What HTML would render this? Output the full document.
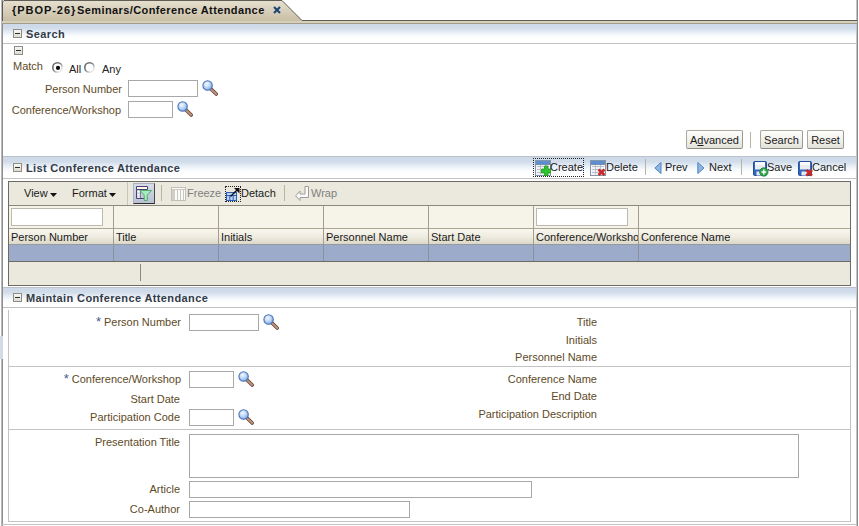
<!DOCTYPE html>
<html><head><meta charset="utf-8">
<style>
*{box-sizing:border-box;margin:0;padding:0}
html,body{width:859px;height:526px;overflow:hidden;background:#fff;font-family:"Liberation Sans",sans-serif;font-size:11px}
.a{position:absolute}
.t{position:absolute;white-space:nowrap;line-height:13px;font-size:11px}
.lbl{color:#5e4a26}
.r{text-align:right}
.hdr{position:absolute;left:3px;width:853px;height:20px;background:linear-gradient(#cdd9e8 0,#d1dcea 22%,#e6edf5 42%,#f9fbfd 62%,#fff 80%);border-bottom:1px solid #c3c3c3}
.htxt{position:absolute;left:23px;top:4px;font-weight:bold;font-size:11px;line-height:13px;color:#333b48;letter-spacing:0.33px;white-space:nowrap}
.col{position:absolute;width:9px;height:9px;border:1px solid #8e8e86;background:linear-gradient(#f8f8f4,#dcdcd2)}
.col:after{content:"";position:absolute;left:1px;top:3px;width:5px;height:1px;background:#2e2e2e}
.inp{position:absolute;border:1px solid #a8a8a8;background:#fff}
.btn{position:absolute;top:130px;height:19px;border:1px solid #a9a89f;border-bottom-color:#8e8d85;border-right-color:#9a998f;background:linear-gradient(#fefefd,#f2f1ec 50%,#e2e1d9);color:#1a1a1a;text-align:center;line-height:19px;font-size:11px;border-radius:2px}
.sep{position:absolute;width:1px;background:#b9b5a4}
.ftxt{position:absolute;white-space:nowrap;font-size:11px;line-height:13px;color:#1a1a1a}
.mag{position:absolute;width:17px;height:17px}
</style></head><body>
<svg width="0" height="0" style="position:absolute">
<defs>
<radialGradient id="lens" cx="0.4" cy="0.35" r="0.7"><stop offset="0" stop-color="#f4f9ff"/><stop offset="0.55" stop-color="#b9d3f5"/><stop offset="1" stop-color="#6f9be0"/></radialGradient>
<symbol id="magi" viewBox="0 0 17 17">
<line x1="9.3" y1="9.3" x2="14.2" y2="14" stroke="#6a4636" stroke-width="3.6" stroke-linecap="round"/>
<line x1="9.3" y1="9.3" x2="14.2" y2="14" stroke="#c09682" stroke-width="1.8" stroke-linecap="round"/>
<circle cx="5.6" cy="5.5" r="4.7" fill="url(#lens)" stroke="#4a74b8" stroke-width="1.1"/>
</symbol>
</defs></svg>
<!-- outer borders -->
<div class="a" style="left:1px;top:0;width:1px;height:526px;background:#b8b8b8"></div><div class="a" style="left:2px;top:0;width:1px;height:526px;background:#8e8e8e"></div>
<div class="a" style="left:856px;top:0;width:1px;height:526px;background:#c4c4c4"></div><div class="a" style="left:857px;top:0;width:1px;height:526px;background:#8a8a8a"></div>
<div class="a" style="left:0;top:336px;width:3px;height:23px;background:#d3dce6"></div>

<!-- tab -->
<svg class="a" style="left:0;top:0" width="859" height="24">
<defs><linearGradient id="tg" x1="0" y1="0" x2="0" y2="1"><stop offset="0" stop-color="#e6e0cf"/><stop offset="1" stop-color="#c6bba2"/></linearGradient></defs>
<path d="M2,22 L2,2 L4,0.5 L282,0.5 L302,20.5 L857,20.5 L857,23 L2,23 Z" fill="url(#tg)"/>
<path d="M2.5,21 L2.5,2 L4,0.5 L282,0.5 L302,20.5 L857,20.5" fill="none" stroke="#4e4c44" stroke-width="0.9"/>
<rect x="2" y="21" width="855" height="2" fill="#d6cfba"/>
<rect x="2" y="23" width="855" height="1" fill="#a29c88"/>
</svg>
<div class="t" style="left:12px;top:4px;font-weight:bold;color:#111;letter-spacing:0.95px">{PBOP-26}</div><div class="t" style="left:77px;top:4px;font-weight:bold;color:#111;letter-spacing:0.4px">Seminars/Conference Attendance</div>
<svg class="a" style="left:273px;top:6px" width="8" height="8"><path d="M1,1 L7,7 M7,1 L1,7" stroke="#1b4474" stroke-width="2.1"/></svg>

<!-- search header -->
<div class="hdr" style="top:24px"><div class="col" style="left:10px;top:5px"></div><div class="htxt" style="letter-spacing:0.4px">Search</div></div>
<div class="col" style="left:14px;top:46px"></div>
<div class="t lbl" style="left:13px;top:60px">Match</div>
<svg class="a" style="left:52px;top:62px" width="11" height="11"><defs><linearGradient id="rb" x1="0" y1="0" x2="1" y2="1"><stop offset="0" stop-color="#5a5a5a"/><stop offset="0.45" stop-color="#7c7c7c"/><stop offset="0.75" stop-color="#dcdcdc"/><stop offset="1" stop-color="#f6f6f6"/></linearGradient></defs><circle cx="5.5" cy="5.5" r="4.7" fill="#fff" stroke="url(#rb)" stroke-width="1.6"/><circle cx="6" cy="5.9" r="2.1" fill="#0a0a0a"/></svg>
<div class="t" style="left:69px;top:63px;color:#222">All</div>
<svg class="a" style="left:84px;top:62px" width="11" height="11"><circle cx="5.5" cy="5.5" r="4.7" fill="#fff" stroke="url(#rb)" stroke-width="1.6"/></svg>
<div class="t" style="left:102px;top:63px;color:#222">Any</div>
<div class="t lbl r" style="left:20px;width:102px;top:83px">Person Number</div>
<div class="inp" style="left:128px;top:80px;width:70px;height:17px"></div>
<svg class="mag" style="left:202px;top:80px"><use href="#magi"/></svg>
<div class="t lbl r" style="left:10px;width:111px;top:104px">Conference/Workshop</div>
<div class="inp" style="left:128px;top:101px;width:45px;height:17px"></div>
<svg class="mag" style="left:177px;top:101px"><use href="#magi"/></svg>

<div class="btn" style="left:686px;width:57px">A<span style="text-decoration:underline">d</span>vanced</div>
<div class="sep" style="left:750px;top:132px;height:16px"></div>
<div class="btn" style="left:760px;width:43px">Search</div>
<div class="btn" style="left:807px;width:37px">Reset</div>

<!-- list header -->
<div class="hdr" style="top:156px;height:23px;border-top:1px solid #bcc2ca"><div class="col" style="left:10px;top:6px"></div><div class="htxt" style="top:5px">List Conference Attendance</div></div>

<!-- table -->
<div class="a" style="left:8px;top:181px;width:843px;height:105px;border:1px solid #6e6c62;background:#ebe9dd"></div>
<div class="a" style="left:9px;top:205px;width:841px;height:1px;background:#8a887e"></div>
<div class="a" style="left:9px;top:206px;width:841px;height:22px;background:#f6f3e8"></div>
<div class="a" style="left:9px;top:228px;width:841px;height:1px;background:#a9a696"></div>
<div class="a" style="left:9px;top:229px;width:841px;height:15px;background:linear-gradient(#f8f6ee,#efece1 50%,#dcd8c8)"></div>
<div class="a" style="left:9px;top:244px;width:841px;height:17px;background:#9cabc9;border-top:1px solid #969aa3"></div>
<div class="a" style="left:9px;top:261px;width:841px;height:1px;background:#6c6b64"></div>

<!-- toolbar -->
<div class="ftxt" style="left:24px;top:187px">View</div>
<svg class="a" style="left:50px;top:193px" width="8" height="5"><path d="M0,0 L7,0 L3.5,4 Z" fill="#111"/></svg>
<div class="ftxt" style="left:72px;top:187px">Format</div>
<svg class="a" style="left:109px;top:193px" width="8" height="5"><path d="M0,0 L7,0 L3.5,4 Z" fill="#111"/></svg>
<div class="a" style="left:127px;top:182px;width:1px;height:23px;background:#c9c6b8"></div>
<div class="a" style="left:133px;top:183px;width:22px;height:21px;border:1px solid #6f7a8c;border-top-color:#aab3c2;border-left-color:#aab3c2;border-bottom-color:#2d2d2d;border-right-color:#4a4a4a;background:linear-gradient(#d7dde8,#b8c2d3)"></div>
<svg class="a" style="left:136px;top:186px" width="17" height="16">
<path d="M0.5,0.5 H11.5 V3.5 H0.5 Z" fill="#fffbe6" stroke="#4a4272"/>
<path d="M0.5,3.5 V12.5 H11.5" fill="none" stroke="#4a4272"/>
<path d="M1.5,5 H3.5 V6.5 H1.5 Z M1.5,8 H3.5 V9.5 H1.5 Z M1.5,10.5 H3.5 V11.8 H1.5 Z" fill="#fff"/>
<path d="M4.5,4 V12" stroke="#6d6890" stroke-width="0.8"/>
<path d="M4,4.5 L15.5,4.5 L11.3,9.2 L11.3,14.5 L8.2,14.5 L8.2,9.2 Z" fill="#a6ebbd" stroke="#4ba566" stroke-width="0.9"/>
</svg>
<div class="a" style="left:161px;top:185px;width:1px;height:16px;background:#b9b5a4"></div>
<svg class="a" style="left:171px;top:187px" width="15" height="14">
<rect x="0.5" y="0.5" width="14" height="13" fill="#fbfbf8" stroke="#c0c0b8"/>
<rect x="1" y="2" width="3" height="11" fill="#cfcfc8"/>
<path d="M1,2.5 H14 M6.5,2 V13 M9.5,2 V13 M12.5,2 V13" stroke="#c8c8c0"/>
</svg>
<div class="ftxt" style="left:187px;top:187px;color:#7f7f7f">Freeze</div>
<div class="a" style="left:225px;top:186px;width:16px;height:16px;border:1px dotted #222"></div>
<svg class="a" style="left:226px;top:187px" width="15" height="15">
<rect x="0.5" y="5.5" width="10" height="8" fill="#bcd4f4" stroke="#2f5fb8"/>
<path d="M0.5,8.5 H10.5 M3.8,8.5 V13.5 M7.2,8.5 V13.5" stroke="#2f5fb8"/>
<path d="M4.5,9.5 L12.5,1.5" stroke="#111" stroke-width="1.4"/>
<path d="M8,1 H13.5 V6.5 Z" fill="#111"/>
</svg>
<div class="ftxt" style="left:241px;top:187px">Detach</div>
<div class="a" style="left:284px;top:185px;width:1px;height:16px;background:#b9b5a4"></div>
<svg class="a" style="left:295px;top:186px" width="15" height="15">
<path d="M10,0.5 H13.5 V11.5 H5 V14.5 L0.6,9.8 L5,5 V8 H10 Z" fill="#fafafa" stroke="#9c9c98" stroke-width="1"/>
</svg>
<div class="ftxt" style="left:311px;top:187px;color:#7f7f7f">Wrap</div>

<!-- filter inputs / cols -->
<div class="inp" style="left:11px;top:208px;width:92px;height:18px;border-color:#bcbab0"></div>
<div class="inp" style="left:536px;top:208px;width:92px;height:18px;border-color:#bcbab0"></div>
<div class="a" style="left:113px;top:206px;width:1px;height:38px;background:#a29f91"></div><div class="a" style="left:113px;top:245px;width:1px;height:16px;background:#8a92a2"></div>
<div class="a" style="left:218px;top:206px;width:1px;height:38px;background:#a29f91"></div><div class="a" style="left:218px;top:245px;width:1px;height:16px;background:#8a92a2"></div>
<div class="a" style="left:323px;top:206px;width:1px;height:38px;background:#a29f91"></div><div class="a" style="left:323px;top:245px;width:1px;height:16px;background:#8a92a2"></div>
<div class="a" style="left:428px;top:206px;width:1px;height:38px;background:#a29f91"></div><div class="a" style="left:428px;top:245px;width:1px;height:16px;background:#8a92a2"></div>
<div class="a" style="left:533px;top:206px;width:1px;height:38px;background:#a29f91"></div><div class="a" style="left:533px;top:245px;width:1px;height:16px;background:#8a92a2"></div>
<div class="a" style="left:638px;top:206px;width:1px;height:38px;background:#a29f91"></div><div class="a" style="left:638px;top:245px;width:1px;height:16px;background:#8a92a2"></div>
<div class="ftxt" style="left:11px;top:231px">Person Number</div>
<div class="ftxt" style="left:116px;top:231px">Title</div>
<div class="ftxt" style="left:221px;top:231px">Initials</div>
<div class="ftxt" style="left:326px;top:231px">Personnel Name</div>
<div class="ftxt" style="left:431px;top:231px">Start Date</div>
<div class="ftxt" style="left:536px;top:231px;width:102px;overflow:hidden">Conference/Workshop</div>
<div class="ftxt" style="left:641px;top:231px">Conference Name</div>
<div class="a" style="left:140px;top:264px;width:1px;height:17px;background:#8c8a80"></div>

<!-- list header buttons -->
<div class="a" style="left:533px;top:158px;width:51px;height:19px;border:1px dotted #222"></div>
<svg class="a" style="left:535px;top:160px" width="16" height="16">
<rect x="0.5" y="0.5" width="15" height="15" fill="#f2f4f7" stroke="#8595aa"/>
<rect x="1" y="1" width="14" height="3" fill="#5b8fd0"/>
<path d="M1,4.5 H15" stroke="#7a8ca6"/>
<path d="M2,6.5 H14 M2,9.5 H14 M2,12.5 H14 M5.5,5 V14.5 M10.5,5 V14.5" stroke="#b6bfcb"/>
<path d="M9.5,6 V9 H6.5 V13 H9.5 V16 H13 V13 H16 V9 H13 V6 Z" fill="#2ec42e" stroke="#1a8f1a" stroke-width="0.7"/>
</svg>
<div class="ftxt" style="left:550px;top:161px">Create</div>
<svg class="a" style="left:590px;top:160px" width="16" height="16">
<rect x="0.5" y="0.5" width="15" height="15" fill="#f2f4f7" stroke="#8595aa"/>
<rect x="1" y="1" width="14" height="3" fill="#5b8fd0"/>
<path d="M1,4.5 H15" stroke="#7a8ca6"/>
<path d="M2,6.5 H14 M2,9.5 H14 M2,12.5 H14 M5.5,5 V14.5 M10.5,5 V14.5" stroke="#b6bfcb"/>
<path d="M8.5,9.5 L14.5,15 M14.5,9.5 L8.5,15" stroke="#c8282a" stroke-width="2.6"/>
</svg>
<div class="ftxt" style="left:606px;top:161px">Delete</div>
<div class="a" style="left:645px;top:159px;width:1px;height:16px;background:#b9b5a4"></div>
<svg class="a" style="left:654px;top:162px" width="8" height="12"><path d="M7,0.5 L0.8,6 L7,11.5 Z" fill="#8fb6e0" stroke="#4f85c4" stroke-width="1"/></svg>
<div class="ftxt" style="left:665px;top:161px">Prev</div>
<svg class="a" style="left:697px;top:162px" width="8" height="12"><path d="M0.8,0.5 L7,6 L0.8,11.5 Z" fill="#8fb6e0" stroke="#4f85c4" stroke-width="1"/></svg>
<div class="ftxt" style="left:709px;top:161px">Next</div>
<div class="a" style="left:741px;top:159px;width:1px;height:16px;background:#b9b5a4"></div>
<svg class="a" style="left:753px;top:161px" width="16" height="16">
<rect x="0.5" y="0.5" width="13" height="14" rx="1.2" fill="#3467bd" stroke="#234f9c"/>
<rect x="2" y="1" width="10" height="7.5" fill="#e9ecf0"/>
<rect x="2" y="1" width="10" height="3" fill="#fbfbfb"/>
<rect x="3.5" y="10.5" width="6.5" height="4" fill="#e4ebf5"/>
<circle cx="10.8" cy="11" r="4.2" fill="#2fa64b" stroke="#1b7a33" stroke-width="0.8"/>
<path d="M10.8,8.6 V13.4 M8.4,11 H13.2" stroke="#fff" stroke-width="1.5"/>
</svg>
<div class="ftxt" style="left:767px;top:161px">Save</div>
<svg class="a" style="left:798px;top:161px" width="16" height="16">
<rect x="0.5" y="0.5" width="13" height="14" rx="1.2" fill="#3467bd" stroke="#234f9c"/>
<rect x="2" y="1" width="10" height="7.5" fill="#e9ecf0"/>
<rect x="2" y="1" width="10" height="3" fill="#fbfbfb"/>
<rect x="3.5" y="10.5" width="6.5" height="4" fill="#e4ebf5"/>
<path d="M8.3,9 L14,14.7 M14,9 L8.3,14.7" stroke="#c8282a" stroke-width="2.6"/>
</svg>
<div class="ftxt" style="left:812px;top:161px">Cancel</div>

<!-- maintain header -->
<div class="hdr" style="top:287px;height:21px;border-top:1px solid #bcc2ca"><div class="col" style="left:10px;top:5px"></div><div class="htxt" style="top:4px;letter-spacing:0.38px">Maintain Conference Attendance</div></div>
<div class="a" style="left:8px;top:310px;width:843px;height:212px;border:1px solid #c3c3c3;border-top:none"></div>
<div class="a" style="left:9px;top:366px;width:841px;height:1px;background:#c3c3c3"></div>
<div class="a" style="left:9px;top:429px;width:841px;height:1px;background:#c3c3c3"></div>
<div class="a" style="left:2px;top:524px;width:855px;height:1px;background:#c3c3c3"></div>

<div class="t lbl r" style="left:60px;width:121px;top:316px"><span style="color:#3d5d90;font-size:13px;line-height:0;position:relative;top:0px;margin-right:3px">*</span>Person Number</div>
<div class="inp" style="left:189px;top:314px;width:70px;height:17px"></div>
<svg class="mag" style="left:263px;top:314px"><use href="#magi"/></svg>
<div class="t lbl r" style="left:400px;width:197px;top:316px">Title</div>
<div class="t lbl r" style="left:400px;width:197px;top:334px">Initials</div>
<div class="t lbl r" style="left:400px;width:197px;top:351px">Personnel Name</div>

<div class="t lbl r" style="left:40px;width:141px;top:373px"><span style="color:#3d5d90;font-size:13px;line-height:0;position:relative;top:0px;margin-right:3px">*</span>Conference/Workshop</div>
<div class="inp" style="left:189px;top:371px;width:45px;height:17px"></div>
<svg class="mag" style="left:238px;top:371px"><use href="#magi"/></svg>
<div class="t lbl r" style="left:60px;width:120px;top:393px">Start Date</div>
<div class="t lbl r" style="left:60px;width:120px;top:411px">Participation Code</div>
<div class="inp" style="left:189px;top:409px;width:45px;height:17px"></div>
<svg class="mag" style="left:238px;top:409px"><use href="#magi"/></svg>
<div class="t lbl r" style="left:400px;width:197px;top:373px">Conference Name</div>
<div class="t lbl r" style="left:400px;width:197px;top:390px">End Date</div>
<div class="t lbl r" style="left:400px;width:197px;top:408px">Participation Description</div>

<div class="t lbl r" style="left:60px;width:120px;top:436px">Presentation Title</div>
<div class="inp" style="left:189px;top:434px;width:610px;height:44px"></div>
<div class="t lbl r" style="left:60px;width:120px;top:483px">Article</div>
<div class="inp" style="left:189px;top:481px;width:343px;height:17px"></div>
<div class="t lbl r" style="left:60px;width:120px;top:503px">Co-Author</div>
<div class="inp" style="left:189px;top:501px;width:221px;height:17px"></div>
</body></html>
